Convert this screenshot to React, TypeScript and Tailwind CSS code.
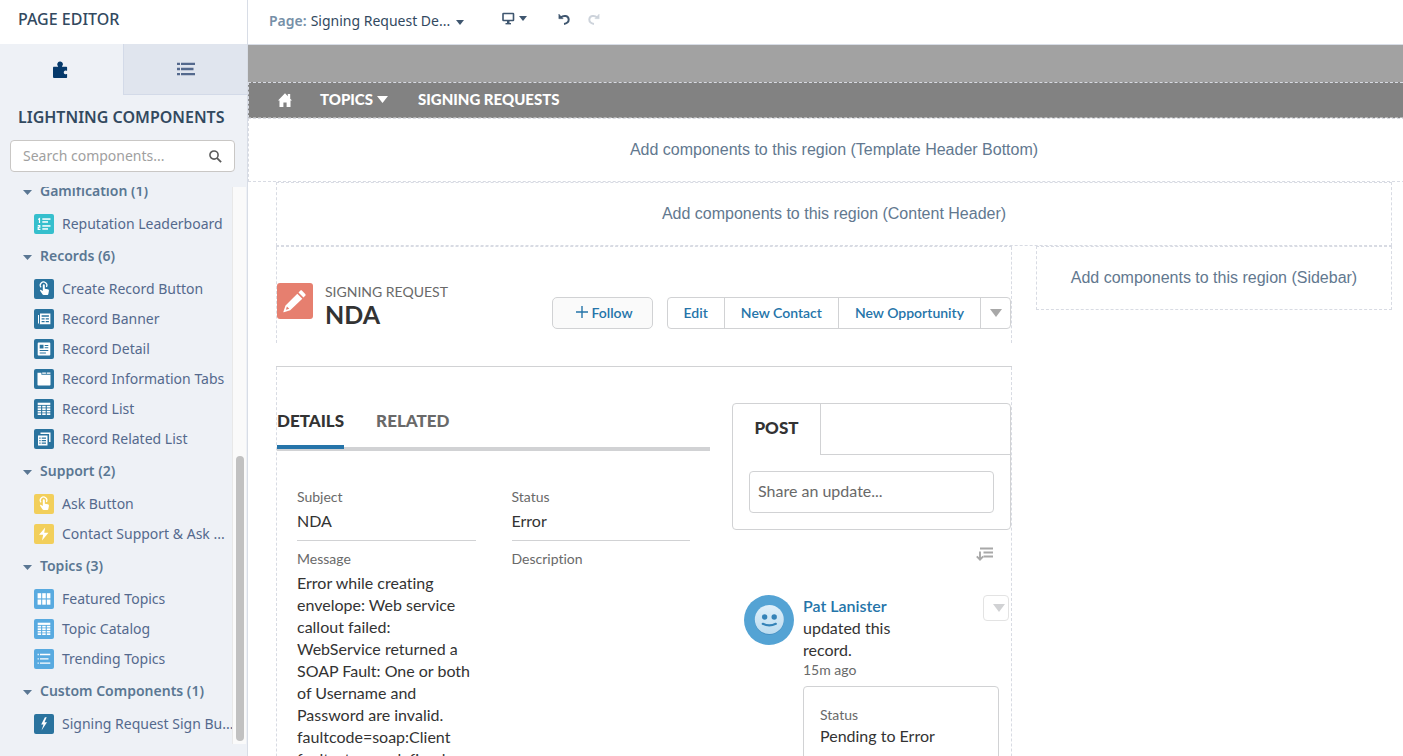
import React from "react";

type IconKind =
  | "leaderboard"
  | "touch"
  | "banner"
  | "detail"
  | "tabs"
  | "table"
  | "related"
  | "bolt"
  | "grid"
  | "list"
  | "customBolt";

type Item = { label: string; icon: IconKind; tone: string };
type Group = { title: string; items: Item[] };

const TEAL = "bg-[#35bfcd]";
const NAVY = "bg-[#2a739e]";
const YELLOW = "bg-[#f2cf5b]";
const SKY = "bg-[#58aae0]";

const GROUPS: Group[] = [
  {
    title: "Gamification (1)",
    items: [{ label: "Reputation Leaderboard", icon: "leaderboard", tone: TEAL }],
  },
  {
    title: "Records (6)",
    items: [
      { label: "Create Record Button", icon: "touch", tone: NAVY },
      { label: "Record Banner", icon: "banner", tone: NAVY },
      { label: "Record Detail", icon: "detail", tone: NAVY },
      { label: "Record Information Tabs", icon: "tabs", tone: NAVY },
      { label: "Record List", icon: "table", tone: NAVY },
      { label: "Record Related List", icon: "related", tone: NAVY },
    ],
  },
  {
    title: "Support (2)",
    items: [
      { label: "Ask Button", icon: "touch", tone: YELLOW },
      { label: "Contact Support & Ask ...", icon: "bolt", tone: YELLOW },
    ],
  },
  {
    title: "Topics (3)",
    items: [
      { label: "Featured Topics", icon: "grid", tone: SKY },
      { label: "Topic Catalog", icon: "table", tone: SKY },
      { label: "Trending Topics", icon: "list", tone: SKY },
    ],
  },
  {
    title: "Custom Components (1)",
    items: [{ label: "Signing Request Sign Bu...", icon: "customBolt", tone: NAVY }],
  },
];

function Glyph({ kind }: { kind: IconKind }) {
  switch (kind) {
    case "leaderboard":
      return (
        <g>
          <path d="M4.2 5.4L5.500 4.600V9M3.800 11.500h2v1.700H4.200V15.400H6.400" fill="none" stroke="#fff" strokeWidth="1.200" />
          <rect x="8.300" y="4.300" width="8.200" height="1.500" />
          <rect x="8.300" y="7.200" width="5.700" height="1.500" />
          <rect x="8.300" y="11.200" width="8.200" height="1.500" />
          <rect x="8.300" y="14.200" width="5.700" height="1.500" />
        </g>
      );
    case "touch":
      return (
        <g>
          <path d="M7 8.4A3.3 3.3 0 1 1 12.4 8" fill="none" stroke="#fff" strokeWidth="1.2" />
          <path d="M8.8 6.3a1 1 0 0 1 2 0v3.4l3 .6c.9.2 1.2.8 1.1 1.6l-.5 2.8c-.1.8-.6 1.3-1.2 1.3H9.6c-.4 0-.8-.2-1-.5l-2.5-3.7c-.3-.6.5-1.200 1-.9l1.700 1z" />
        </g>
      );
    case "banner":
      return (
        <g>
          <path d="M4 6v8.500h1V6z" />
          <path fillRule="evenodd" d="M6 4.600h10.400v10.700H5.600c.3-.3.4-.6.4-1zM7.600 6.200v1.500h7.300V6.200zM7.600 9.200v1.200h3V9.200zM11.700 9.200v1.200h3.200V9.200zM7.600 12v1.300h3V12zM11.700 12v1.300h3.200V12z" />
        </g>
      );
    case "detail":
      return (
        <path fillRule="evenodd" d="M4.500 3.600h11c.5 0 .8.300.8.800v11.300c0 .5-.3.800-.8.800h-11c-.5 0-.8-.3-.8-.8V4.400c0-.5.300-.800.800-.800zM5.700 5.800v3.600h3.800V5.800zM10.700 6v1h3.600V6zM10.700 8.200v1h3.600v-1zM5.700 11v1.100h8.600V11zM5.700 13.400v1.100h6.200v-1.100z" />
      );
    case "tabs":
      return (
        <g>
          <path d="M3.500 3.700h3.900v2.100h9.100v10c0 .4-.3.700-.7.700H4.200c-.4 0-.7-.3-.7-.7z" />
          <rect x="8.200" y="3.500" width="3.700" height="1.300" />
          <rect x="12.700" y="3.500" width="3.700" height="1.300" />
        </g>
      );
    case "table":
      return (
        <g>
          <rect x="3.700" y="3.700" width="12.600" height="2.200" />
          {[6.800, 9.300, 11.800, 14.300].map((y) => (
            <g key={y}>
              <rect x="3.700" y={y} width="3.400" height="1.700" />
              <rect x="8.200" y={y} width="3.500" height="1.700" />
              <rect x="12.800" y={y} width="3.500" height="1.700" />
            </g>
          ))}
        </g>
      );
    case "related":
      return (
        <g>
          <path d="M6.500 4.200h9.300v8.800" fill="none" stroke="#fff" strokeWidth="1.400" />
          <path fillRule="evenodd" d="M4 6.500h9.500v10H4zM5.300 8.500v1.200h1.300V8.500zM7.700 8.500v1.200h4.300V8.500zM5.300 11v1.200h1.300V11zM7.700 11v1.200h4.300V11zM5.300 13.500v1.200h1.300v-1.200zM7.700 13.500v1.200h4.300v-1.200z" />
        </g>
      );
    case "bolt":
      return <path d="M11.200 3.500L5 10.800h4.200l-1.200 5.700 6.500-7.800h-4.300z" />;
    case "grid":
      return (
        <g>
          {[3.600, 8.200, 12.800].map((x) => (
            <g key={x}>
              <rect x={x} y="4.200" width="3.600" height="5.200" />
              <rect x={x} y="10.500" width="3.600" height="5.200" />
            </g>
          ))}
        </g>
      );
    case "list":
      return (
        <g>
          <path d="M6 5.500h10.300M6 9.800h8.500M6 14.200h10.300" stroke="#fff" strokeWidth="1.300" fill="none" />
          <path d="M3.600 5.500h1.200M3.600 9.800h1.200M3.600 14.200h1.200" stroke="#fff" strokeWidth="1.300" fill="none" />
        </g>
      );
    default:
      return <path d="M10.900 3.200L7.200 10.400h2.300l-2 6.200 5.500-8.300h-2.500l2.200-5.100z" />;
  }
}

function Caret({ className }: { className: string }) {
  return (
    <svg viewBox="0 0 10 6" className={className} fill="currentColor" preserveAspectRatio="none" aria-hidden="true">
      <path d="M0 0h10L5 6z" />
    </svg>
  );
}

function Sidebar() {
  return (
    <aside className="flex w-[248px] shrink-0 flex-col border-r border-[#d8dde6] bg-[#eef1f6]">
      <header className="flex h-11 shrink-0 items-center bg-white px-[18px] pb-[6px]">
        <h1 className="text-[16px] leading-6 font-medium text-[#32495f]">PAGE EDITOR</h1>
      </header>
      <div className="grid h-[51px] shrink-0 grid-cols-[123fr_124fr]">
        <button type="button" aria-label="Components" className="flex items-center justify-center text-[#05396b]">
          <svg viewBox="0 0 16 18" className="-ml-1 h-[18px] w-4" fill="currentColor" aria-hidden="true">
            <path d="M2 5.800h3.800c.3 0 .4-.2.300-.5A2.700 2.700 0 0 1 7.800.6a2.700 2.700 0 0 1 2.200 4.700c-.1.300 0 .5.300.5h4c.6 0 .8.200.800.700v3c0 .3-.3.400-.6.200a1.900 1.900 0 1 0 0 3.400c.3-.2.600-.100.600.200v2.800c0 .7-.3 1-1 1H2.500C1.400 17.100 1 16.600 1 15.500V7c0-.8.300-1.200 1-1.200z" />
          </svg>
        </button>
        <button type="button" aria-label="Page structure" className="flex items-center justify-center border-b border-l border-[#d3dae8] bg-[#e0e5ee] text-[#54698d]">
          <svg viewBox="0 0 18 14" className="h-[14px] w-[18px]" fill="currentColor" aria-hidden="true">
            <path d="M4 .7h14V3H4zM4 5.800h12.500v2.400H4zM4 11h14v2.300H4zM0 .7h3V3H0zM0 5.800h3v2.400H0zM0 11h3v2.300H0z" />
          </svg>
        </button>
      </div>
      <h2 className="mt-[10px] px-[18px] text-[16px] leading-6 font-semibold whitespace-nowrap text-[#32495f]">LIGHTNING COMPONENTS</h2>
      <div className="mx-[10px] mt-[11px] mr-3 flex h-8 shrink-0 items-center rounded-[4px] border border-[#c9c7c5] bg-white pr-3 pl-3">
        <input
          type="text"
          aria-label="Search components"
          placeholder="Search components..."
          className="min-w-0 flex-1 bg-transparent pb-[2px] text-[14px] text-[#32495f] outline-none placeholder:text-[#a0a0a0]"
        />
        <svg viewBox="0 0 14 14" className="size-[13px]" fill="none" stroke="#5a5a5a" strokeWidth="1.700" aria-hidden="true">
          <circle cx="5.400" cy="5.400" r="4.400" />
          <path d="M8.700 8.700L13 13" strokeWidth="2" />
        </svg>
      </div>
      <div className="mt-[15px] mb-3 flex min-h-0 flex-1">
        <nav className="w-[232px] shrink-0 overflow-hidden">
          <div className="-mt-[13px]">
            {GROUPS.map((group) => (
              <section key={group.title}>
                <button type="button" className="flex h-[35px] w-full items-center gap-2 pb-[2px] pl-[23px] text-left text-[14px] font-semibold text-[#5a7793]">
                  <Caret className="mt-1 h-[5px] w-[9px]" />
                  <span>{group.title}</span>
                </button>
                <ul>
                  {group.items.map((item) => (
                    <li key={item.label} className="flex h-[30px] items-center gap-2 pl-[34px] text-[14px] whitespace-nowrap text-[#54698d]">
                      <span className={`${item.tone} size-5 shrink-0 rounded-[2px]`}>
                        <svg viewBox="0 0 20 20" className="size-5" fill="#fff" aria-hidden="true">
                          <Glyph kind={item.icon} />
                        </svg>
                      </span>
                      <span className="pb-[2px]">{item.label}</span>
                    </li>
                  ))}
                </ul>
              </section>
            ))}
          </div>
        </nav>
        <div className="flex w-[14px] shrink-0 flex-col items-center justify-end border-l border-[#e8e8e8] bg-[#fafafa] pb-[3px]">
          <div className="h-[285px] w-2 rounded-full bg-[#c1c1c1]" />
        </div>
      </div>
    </aside>
  );
}

function Toolbar() {
  return (
    <div className="flex h-[45px] shrink-0 items-center border-b border-[#d8dde6] bg-white pl-[21px] text-[14px] text-[#32495f]">
      <button type="button" className="flex items-center pb-1 whitespace-nowrap">
        <span className="mr-1 font-semibold text-[#7690a8]">Page:</span>
        <span>Signing Request De...</span>
        <Caret className="mt-1 ml-[6px] h-[5px] w-2 text-[#3f566f]" />
      </button>
      <button type="button" aria-label="Device" className="ml-[38px] flex items-center gap-1 pb-2 text-[#3f566f]">
        <svg viewBox="0 0 13 13" className="size-[13px]" fill="none" stroke="currentColor" aria-hidden="true">
          <rect x="1" y="1.500" width="10.500" height="7" rx=".5" strokeWidth="1.600" />
          <path d="M6.250 8.500v2.500" strokeWidth="2.500" />
          <path d="M3.500 11.700h5.500" strokeWidth="1.400" />
        </svg>
        <Caret className="h-[5px] w-2" />
      </button>
      <button type="button" aria-label="Undo" className="ml-[31px] pb-[6px] text-[#3f566f]">
        <svg viewBox="0 0 12 12" className="size-3" fill="none" stroke="currentColor" strokeWidth="2" aria-hidden="true">
          <path d="M2.800 4.400C5.500 2 10.500 2.500 10.700 6.500 10.800 9 8.500 10.700 6 10.900" />
          <path d="M.8 1v4.700h4.400z" fill="currentColor" strokeWidth=".4" />
        </svg>
      </button>
      <button type="button" aria-label="Redo" className="ml-[18px] pb-[6px] text-[#cdd3db]">
        <svg viewBox="0 0 12 12" className="size-3" fill="none" stroke="currentColor" strokeWidth="2" aria-hidden="true">
          <path d="M9.200 4.400C6.500 2 1.500 2.500 1.300 6.500 1.200 9 3.500 10.700 6 10.900" />
          <path d="M11.200 1v4.700H6.800z" fill="currentColor" strokeWidth=".4" />
        </svg>
      </button>
    </div>
  );
}

function Region({ name }: { name: string }) {
  return (
    <div className="flex h-16 shrink-0 items-center justify-center border border-dashed border-[#d8dbe3] font-['Liberation_Sans',Arial,sans-serif] text-[16px] whitespace-nowrap text-[#62788f]">
      Add components to this region ({name})
    </div>
  );
}

function RecordHeader() {
  const action = "flex items-center px-4 border-r border-[#d1d2d4] pb-[2px]";
  return (
    <section className="flex h-24 border-x border-dashed border-[#d8dbe3] pt-9">
      <span className="flex size-9 shrink-0 items-center justify-center rounded-[3px] bg-[#e67f6f]">
        <svg viewBox="0 0 24 24" className="size-6" fill="#fff" aria-hidden="true">
          <path d="M17.200 1.800c.6-.6 1.300-.6 1.900 0l3.100 3.100c.6.600.6 1.300 0 1.900l-1.700 1.700-5-5z" />
          <path fillRule="evenodd" d="M14.300 4.700l5 5L7.200 21.300.9 23.300c-.4.100-.6-.100-.5-.5l2.100-6.400zM3.900 17.600l-1 3.200 3.400-1z" />
        </svg>
      </span>
      <div className="ml-3 min-w-0 flex-1">
        <p className="text-[14px] leading-[18px] text-[#696969]">SIGNING REQUEST</p>
        <h2 className="text-[25px] leading-[26px] font-bold text-[#333]">NDA</h2>
      </div>
      <div className="mt-[14px] flex h-8 gap-[14px] text-[14px] font-semibold text-[#2574a9]">
        <button type="button" className="flex w-[101px] items-center justify-center gap-1 rounded-[5px] border border-[#d1d2d4] bg-[#fafafa] pb-[2px] pl-1">
          <svg viewBox="0 0 12 12" className="size-3" stroke="currentColor" strokeWidth="1.400" aria-hidden="true">
            <path d="M6 0v12M0 6h12" />
          </svg>
          Follow
        </button>
        <div className="flex rounded-[4px] border border-[#d1d2d4] bg-white whitespace-nowrap">
          <button type="button" className={action}>Edit</button>
          <button type="button" className={action}>New Contact</button>
          <button type="button" className={action}>New Opportunity</button>
          <button type="button" aria-label="More actions" className="flex w-[29px] items-center justify-center text-[#a8a8a8]">
            <Caret className="h-2 w-3" />
          </button>
        </div>
      </div>
    </section>
  );
}

function Field({ label, children }: { label: string; children?: React.ReactNode }) {
  return (
    <div>
      <dt className="text-[14px] leading-[22px] text-[#696969]">{label}</dt>
      <dd className="mt-[2px] text-[16px] leading-[22px] text-[#333]">{children}</dd>
    </div>
  );
}

function Details() {
  return (
    <section className="min-w-0 flex-1">
      <div role="tablist" className="flex h-[48px] items-start gap-8 border-b-4 border-[#d1d2d4] text-[17px] leading-6 font-black">
        <button type="button" role="tab" aria-selected="true" className="-mb-[2px] h-[46px] shrink-0 border-b-4 border-[#2574a9] pb-[6px] text-[#333]">
          DETAILS
        </button>
        <button type="button" role="tab" aria-selected="false" className="h-[46px] pb-[10px] text-[#696969]">
          RELATED
        </button>
      </div>
      <dl className="grid grid-cols-2 gap-x-9 px-5 pt-[35px]">
        <div className="border-b border-[#d1d2d4] pb-2"><Field label="Subject">NDA</Field></div>
        <div className="border-b border-[#d1d2d4] pb-2"><Field label="Status">Error</Field></div>
        <div className="pt-[7px]">
          <Field label="Message">
            Error while creating envelope: Web service callout failed: WebService returned a SOAP Fault: One or both of
            Username and Password are invalid. faultcode=soap:Client faultactor=undefined
          </Field>
        </div>
        <div className="pt-[7px]"><Field label="Description" /></div>
      </dl>
    </section>
  );
}

function Feed() {
  return (
    <section className="w-[279px] shrink-0">
      <div className="rounded-[4px] border border-[#d1d2d4]">
        <div className="flex h-[51px]">
          <button type="button" className="w-[88px] border-r border-[#d1d2d4] pb-[3px] text-[17px] font-black text-[#333]">POST</button>
          <div className="flex-1 border-b border-[#d1d2d4]" />
        </div>
        <div className="p-4">
          <input
            type="text"
            aria-label="Share an update"
            placeholder="Share an update..."
            className="block h-[42px] w-full rounded-[4px] border border-[#d1d2d4] px-2 pb-[3px] text-[16px] outline-none placeholder:text-[#696969]"
          />
        </div>
      </div>
      <div className="flex justify-end pt-[17px] pr-[18px]">
        <button type="button" aria-label="Sort feed" className="block text-[#a8a8a8]">
          <svg viewBox="0 0 17 14" className="h-[14px] w-[17px]" fill="none" stroke="currentColor" aria-hidden="true">
            <path d="M4 1.500h13M7.500 5.500H17M7.500 9.500H17" strokeWidth="2" />
            <path d="M4 4.500v8M.8 9.300L4 12.600l3.200-3.300" strokeWidth="1.900" />
          </svg>
        </button>
      </div>
      <article className="mt-[34px] flex pl-3">
        <svg viewBox="0 0 50 50" className="size-[50px] shrink-0" aria-hidden="true">
          <defs>
            <linearGradient id="face" x1="0" y1="0" x2="0" y2="1">
              <stop offset="0" stopColor="#e0f0fa" />
              <stop offset="1" stopColor="#bcdcf0" />
            </linearGradient>
          </defs>
          <circle cx="25" cy="25" r="25" fill="#54a3d4" />
          <circle cx="25.300" cy="25.300" r="14.600" fill="#4790c2" />
          <circle cx="25.300" cy="24.500" r="14.500" fill="url(#face)" />
          <circle cx="20.600" cy="22" r="2.700" fill="#3583b8" />
          <circle cx="30.200" cy="22" r="2.700" fill="#3583b8" />
          <path d="M18.800 28.800c4 2 9 2 13 0" fill="none" stroke="#3583b8" strokeWidth="2.200" strokeLinecap="round" />
        </svg>
        <div className="ml-[9px] w-[206px] shrink-0">
          <div className="flex h-[66px] items-start justify-between text-[16px] leading-[22px] text-[#333]">
            <p className="w-[120px]">
              <a href="#pat" className="font-semibold text-[#2574a9]">Pat Lanister</a>
              <br />
              updated this record.
            </p>
            <button type="button" aria-label="Post actions" className="flex size-[26px] shrink-0 items-center justify-end rounded-[4px] border border-[#e3e3e3] pr-[3px] text-[#d1d2d4]">
              <Caret className="h-2 w-3" />
            </button>
          </div>
          <p className="text-[14px] leading-[18px] text-[#696969]">15m ago</p>
          <dl className="mt-[7px] mr-[10px] h-24 rounded-[4px] border border-[#d1d2d4] px-4 pt-[17px]">
            <dt className="text-[14px] leading-[21px] text-[#696969]">Status</dt>
            <dd className="text-[16px] leading-[22px] text-[#333]">Pending to Error</dd>
          </dl>
        </div>
      </article>
    </section>
  );
}

export default function App() {
  return (
    <div className="flex h-screen overflow-hidden bg-white font-['Noto_Sans','Open_Sans',sans-serif] [font-variant-ligatures:none]">
      <Sidebar />
      <main className="flex min-w-0 flex-1 flex-col overflow-hidden">
        <Toolbar />
        <div className="h-[37px] shrink-0 bg-[#a2a2a2]" />
        <nav className="flex h-9 shrink-0 items-center border border-r-0 border-dashed border-[#d8dbe3] border-b-[#b4b4b4] bg-[#828282] pb-px pl-[29px] font-['Lato',sans-serif] text-[15px] font-black text-white">
          <a href="#home" aria-label="Home">
            <svg viewBox="0 0 14 14" className="size-[14px]" fill="currentColor" aria-hidden="true">
              <path d="M7 .3l2.800 2.900V1h2.400v4.700L14 7.500h-1.500V14H8.600V9.500H5.400V14H1.500V7.500H0z" />
            </svg>
          </a>
          <a href="#topics" className="ml-7 flex items-center gap-1">
            TOPICS
            <Caret className="h-[7px] w-[11px]" />
          </a>
          <a href="#signing-requests" className="ml-[30px]">SIGNING REQUESTS</a>
        </nav>
        <div className="-mr-[17px] shrink-0">
          <Region name="Template Header Bottom" />
        </div>
        <div className="pr-[11px] pl-7 font-['Lato',sans-serif]">
          <Region name="Content Header" />
          <div className="grid grid-cols-[736fr_356fr] gap-x-6">
            <div className="min-w-0">
              <div className="border-t border-dashed border-[#d8dbe3]"><RecordHeader /></div>
              <hr className="mt-[23px] border-[#d1d2d4]" />
              <div className="flex h-[500px] gap-[22px] border-x border-dashed border-[#d8dbe3] pt-9">
                <Details />
                <Feed />
              </div>
            </div>
            <div><Region name="Sidebar" /></div>
          </div>
        </div>
      </main>
    </div>
  );
}
